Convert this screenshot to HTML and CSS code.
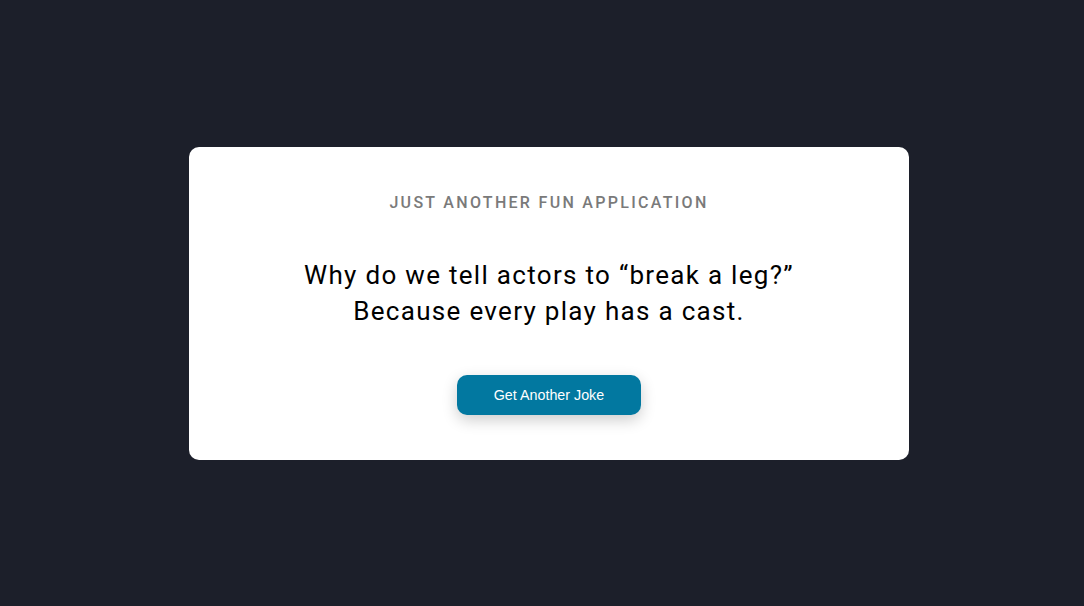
FILE: index.html
```html
<!DOCTYPE html>
<html lang="en">
<head>
<meta charset="utf-8">
<title>Dad Jokes</title>
<link rel="stylesheet" href="styles.css">
</head>
<body>
<main class="page">
  <section class="card">
    <h3 class="eyebrow">Just another fun application</h3>
    <p class="joke">Why do we tell actors to “break a leg?” Because every play has a cast.</p>
    <button class="btn" type="button">Get Another Joke</button>
  </section>
</main>
</body>
</html>
```

FILE: styles.css
```css
* { box-sizing: border-box; }
html, body { margin: 0; padding: 0; height: 100%; }
body {
  background: #1c1f2a;
  font-family: Roboto, "Liberation Sans", sans-serif;
}
.page {
  min-height: 100vh;
  padding-left: 14px;
  display: flex;
  align-items: center;
  justify-content: center;
}
.card {
  width: 720px;
  background: #ffffff;
  border-radius: 10px;
  padding: 41px 60px 45px;
  text-align: center;
  display: flex;
  flex-direction: column;
  align-items: center;
}
.eyebrow {
  margin: 0;
  font-size: 16px;
  font-weight: 500;
  letter-spacing: 2.3px;
  text-transform: uppercase;
  color: #7a7a7a;
  line-height: 30px;
}
.joke {
  margin: 39px 0 0;
  font-size: 26px;
  line-height: 36.5px;
  letter-spacing: 1.3px;
  color: #000000;
  max-width: 520px;
}
.btn {
  margin-top: 45px;
  width: 184px;
  height: 40px;
  border: none;
  border-radius: 10px;
  background: #0278a0;
  color: #ffffff;
  font-family: "Liberation Sans", Arial, sans-serif;
  font-size: 14.3px;
  box-shadow: 0 5px 15px rgba(0, 0, 0, 0.2);
  cursor: pointer;
}
```
